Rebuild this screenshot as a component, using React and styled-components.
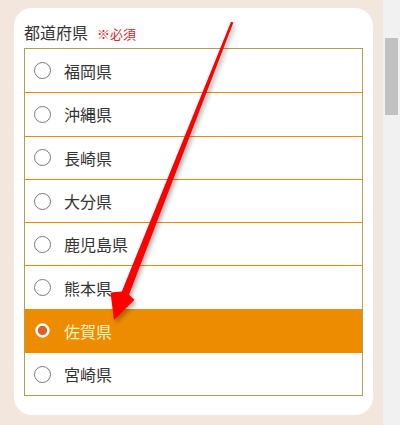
import React, { useState } from 'react'
import styled, { createGlobalStyle } from 'styled-components'

const prefectures = ['福岡県', '沖縄県', '長崎県', '大分県', '鹿児島県', '熊本県', '佐賀県', '宮崎県']

export default function App() {
  const [selected, setSelected] = useState('佐賀県')

  return (
    <Page>
      <GlobalStyle />
      <Main>
        <Card>
          <Title>
            都道府県<Required>※必須</Required>
          </Title>
          <List>
            {prefectures.map((name) => (
              <Row key={name} $active={selected === name} onClick={() => setSelected(name)}>
                <Radio $active={selected === name} />
                <Label $active={selected === name}>{name}</Label>
              </Row>
            ))}
          </List>
        </Card>
      </Main>
      <Scrollbar>
        <Thumb />
      </Scrollbar>
      <Arrow width="400" height="425" viewBox="0 0 400 425">
        <path
          d="M231 21.8 L233.4 22.6 L129 294.8 L134.5 299.8 L114 320 L110.5 292.4 L121.8 291.4 Z"
          fill="#ff0000"
        />
      </Arrow>
    </Page>
  )
}

const GlobalStyle = createGlobalStyle`
  html, body {
    margin: 0;
    padding: 0;
    background: #f3e6dc;
  }
  body {
    font-family: "Noto Sans CJK JP", "Noto Sans", sans-serif;
  }
`

const Page = styled.div`
  position: relative;
  display: flex;
  width: 400px;
  height: 425px;
  overflow: hidden;
`

const Main = styled.div`
  width: 383px;
  padding: 8px 0 0 14px;
  box-sizing: border-box;
  background: #f3e6dc;
`

const Card = styled.div`
  width: 359px;
  height: 407px;
  box-sizing: border-box;
  padding: 12px 10px 0 10px;
  background: #fff;
  border-radius: 18px;
`

const Title = styled.div`
  display: flex;
  align-items: baseline;
  height: 24px;
  line-height: 24px;
  margin-bottom: 4px;
  font-size: 16px;
  color: #333;
`

const Required = styled.span`
  margin-left: 9px;
  font-size: 13px;
  color: #e0262b;
`

const List = styled.div`
  display: flex;
  flex-direction: column;
  border: 1px solid #b39d55;
`

const Row = styled.label`
  display: flex;
  align-items: center;
  gap: 13px;
  height: 43.3px;
  box-sizing: border-box;
  padding-left: 9px;
  background: ${(p) => (p.$active ? '#ee8c00' : '#fff')};
  cursor: pointer;

  & + & {
    border-top: 1px solid ${(p) => (p.$active ? '#ee8c00' : '#b39d55')};
  }
`

const Radio = styled.span`
  flex: none;
  width: 17px;
  height: 17px;
  box-sizing: border-box;
  border-radius: 50%;
  border: ${(p) => (p.$active ? '3px solid #fff' : '1.3px solid #7a7a7a')};
  background: ${(p) => (p.$active ? '#dd5f2e' : '#fff')};
  transform: ${(p) => (p.$active ? 'scale(0.85)' : 'none')};
`

const Label = styled.span`
  font-size: 16px;
  color: ${(p) => (p.$active ? '#fff0c2' : '#333')};
`

const Scrollbar = styled.div`
  width: 17px;
  padding: 38px 2px 0 2px;
  box-sizing: border-box;
  background: #f1f1f1;
`

const Thumb = styled.div`
  height: 77px;
  background: #c1c1c1;
`

const Arrow = styled.svg`
  position: absolute;
  left: 0;
  top: 0;
  pointer-events: none;
  filter: drop-shadow(2px 3px 2px rgba(0, 0, 0, 0.3));
`
